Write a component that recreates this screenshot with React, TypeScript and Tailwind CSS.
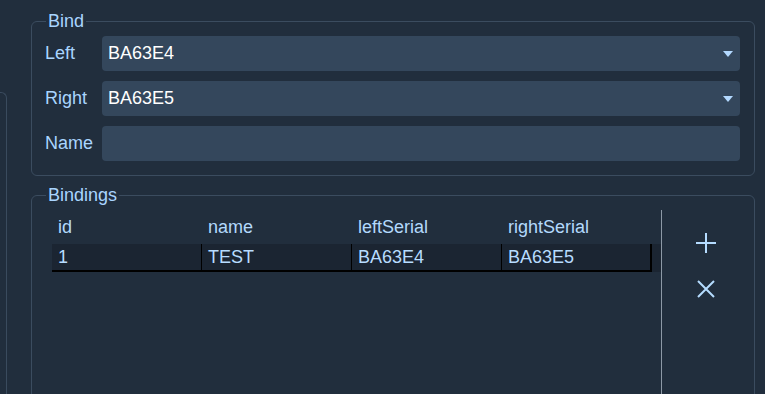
import React from "react";

function Arrow() {
  return (
    <svg width="10" height="6" viewBox="0 0 10 6">
      <polygon points="0,0 10,0 5,6" fill="#b3d9ff" />
    </svg>
  );
}

function Row({ label, children }: { label: string; children: React.ReactNode }) {
  return (
    <div className="flex items-center h-[35px]">
      <div className="w-[57px] shrink-0 text-[#a9d5ff]">{label}</div>
      {children}
    </div>
  );
}

function Select({ value }: { value: string }) {
  return (
    <div className="flex-1 h-full flex items-center justify-between pl-[6px] pr-[7px] bg-[#34475c] rounded-[4px] text-white">
      <span>{value}</span>
      <Arrow />
    </div>
  );
}

const cols = ["id", "name", "leftSerial", "rightSerial"];
const row = ["1", "TEST", "BA63E4", "BA63E5"];

export default function App() {
  return (
    <div className="w-[765px] h-[394px] bg-[#212e3d] flex overflow-hidden font-['Liberation_Sans',Arial,sans-serif] text-[18px] leading-[21px]">
      <div className="w-[7px] shrink-0 mt-[92px] border-t border-r border-[#3a4b5e] rounded-tr-[6px]" />
      <div className="flex-1 flex flex-col pl-[24px] pr-[10px]">
        <fieldset className="mt-[11px] border border-[#3b4c5f] rounded-[6px] pl-[13px] pr-[14px] pt-[5px] pb-[14px] flex flex-col gap-[10px]">
          <legend className="px-[2px] ml-[1px] leading-[20px] text-[#a9d5ff]">Bind</legend>
          <Row label="Left">
            <Select value="BA63E4" />
          </Row>
          <Row label="Right">
            <Select value="BA63E5" />
          </Row>
          <Row label="Name">
            <input className="flex-1 h-full bg-[#34475c] rounded-[4px] outline-none px-[6px] text-white" />
          </Row>
        </fieldset>
        <fieldset className="mt-[9px] h-[240px] shrink-0 border border-[#3b4c5f] rounded-[6px] pl-[13px] pr-0 pt-[5px]">
          <legend className="px-[2px] ml-[1px] leading-[20px] text-[#a9d5ff]">Bindings</legend>
          <div className="flex h-[210px]">
            <div className="w-[616px] shrink-0 pl-[7px] pt-[4px]">
              <div className="flex h-[30px] text-[#b3d9fc] leading-[26px]">
                {cols.map((c) => (
                  <div key={c} className="w-[150px] pl-[6px]">{c}</div>
                ))}
              </div>
              <div className="flex h-[28px] leading-[26px] text-[#b7dcff] bg-[#1b2532]">
                {row.map((c, i) => (
                  <div
                    key={i}
                    className={
                      i === 3
                        ? "w-[150px] pl-[6px] border-b-2 border-r-2 border-black"
                        : "w-[150px] pl-[6px] border-b-2 border-r border-black"
                    }
                  >
                    {c}
                  </div>
                ))}
              </div>
            </div>
            <div className="w-px shrink-0 bg-[#8d99a6]" />
            <div className="flex-1 flex flex-col items-center pr-[4px] pt-[23px] gap-[27px]">
              <svg width="20" height="20" viewBox="0 0 20 20">
                <path d="M10 0V20M0 10H20" stroke="#b5dcff" strokeWidth="2" fill="none" />
              </svg>
              <svg width="18" height="18" viewBox="0 0 18 18">
                <path d="M1 1L17 17M17 1L1 17" stroke="#b5dcff" strokeWidth="2" fill="none" />
              </svg>
            </div>
          </div>
        </fieldset>
      </div>
    </div>
  );
}
